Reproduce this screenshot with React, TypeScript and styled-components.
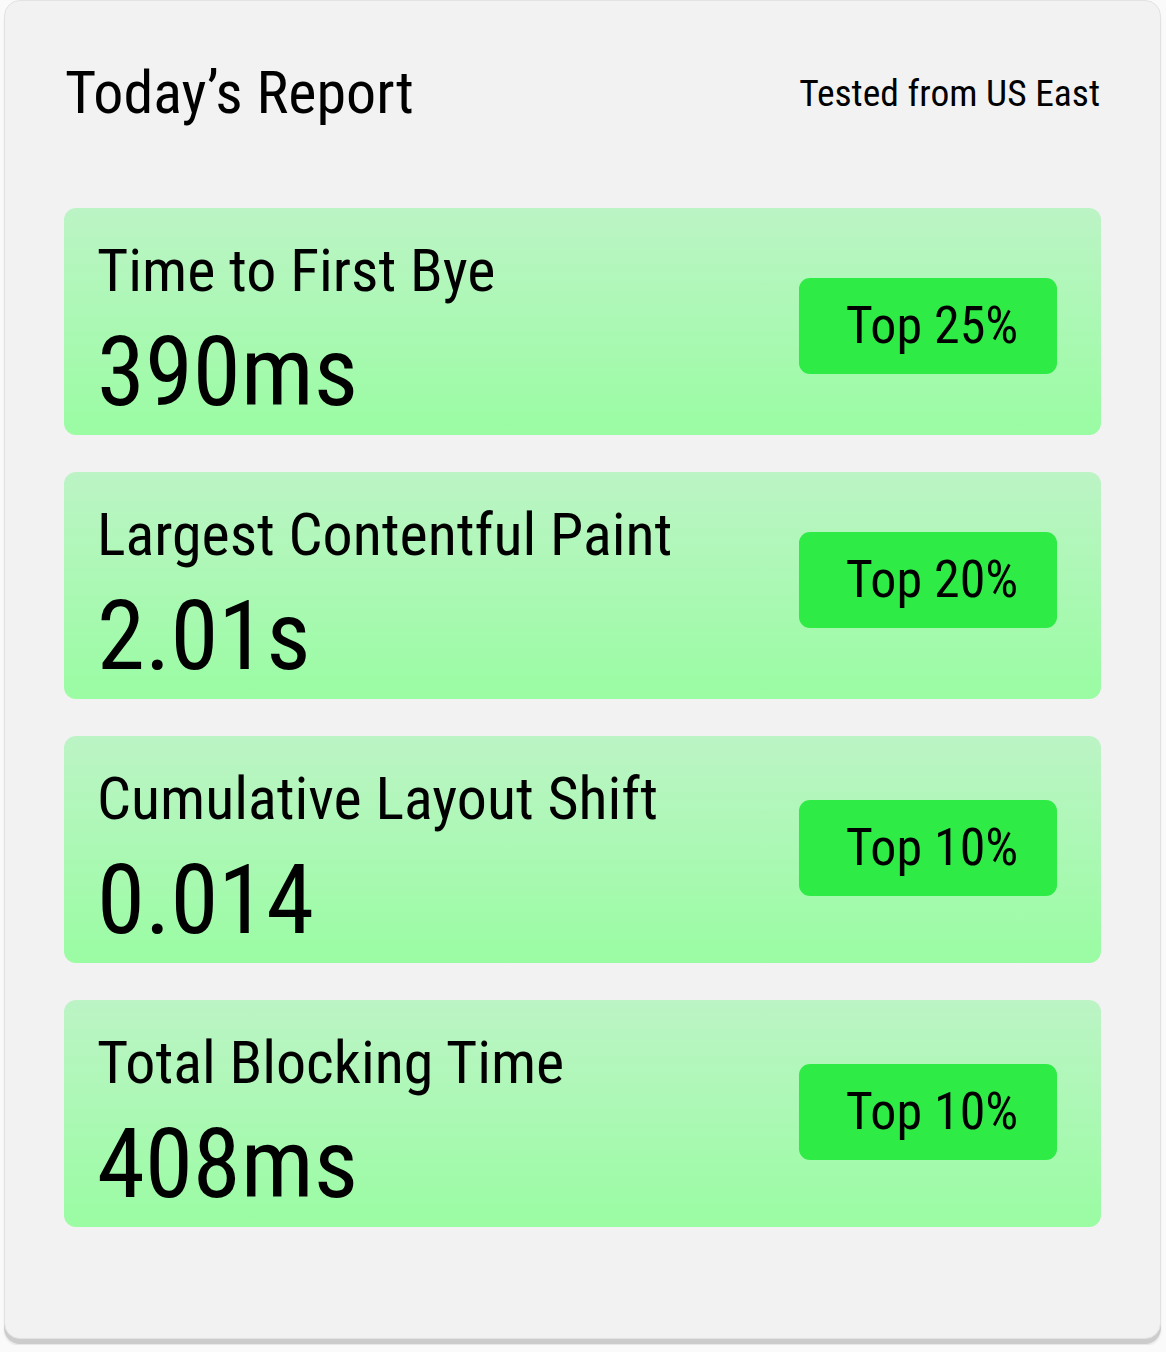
import * as React from 'react';
import styled, { createGlobalStyle } from 'styled-components';

type Metric = {
  label: string;
  value: string;
  rank: string;
  badgeTop: number;
};

const metrics: Metric[] = [
  { label: 'Time to First Bye', value: '390ms', rank: 'Top 25%', badgeTop: 70 },
  { label: 'Largest Contentful Paint', value: '2.01s', rank: 'Top 20%', badgeTop: 60 },
  { label: 'Cumulative Layout Shift', value: '0.014', rank: 'Top 10%', badgeTop: 64 },
  { label: 'Total Blocking Time', value: '408ms', rank: 'Top 10%', badgeTop: 64 },
];

const GlobalStyle = createGlobalStyle`
  body {
    margin: 0;
    background: #fafafa;
    font-family: "Roboto Condensed", "Liberation Sans Narrow", Roboto, sans-serif;
    font-stretch: condensed;
    color: #000;
  }
`;

const App: React.FC = () => {
  return (
    <>
      <GlobalStyle />
      <Styled.Page>
        <Styled.Report>
          <Styled.Header>
            <Styled.Title>Today’s Report</Styled.Title>
            <Styled.Origin>Tested from US East</Styled.Origin>
          </Styled.Header>
          <Styled.List>
            {metrics.map((m) => (
              <Styled.Card key={m.label}>
                <Styled.Info>
                  <Styled.Label>{m.label}</Styled.Label>
                  <Styled.Value>{m.value}</Styled.Value>
                </Styled.Info>
                <Styled.Badge $top={m.badgeTop}>{m.rank}</Styled.Badge>
              </Styled.Card>
            ))}
          </Styled.List>
        </Styled.Report>
      </Styled.Page>
    </>
  );
};

const Styled = {
  Page: styled.div`
    padding: 0 5px 6px 4px;
  `,
  Report: styled.section`
    box-sizing: border-box;
    width: 1157px;
    height: 1339px;
    padding: 62px 59px 0 59px;
    background: #f2f2f2;
    border: 1px solid #e2e2e2;
    border-radius: 16px;
    box-shadow: 0 5px 0 #cccccc, 0 7px 2px #e6e6e6;
  `,
  Header: styled.header`
    display: flex;
    justify-content: space-between;
    align-items: flex-start;
    padding: 0 1px 0 1px;
  `,
  Title: styled.h1`
    margin: 0;
    font-size: 60px;
    font-weight: 400;
    line-height: 1;
  `,
  Origin: styled.span`
    margin-top: 12px;
    font-size: 37.5px;
    line-height: 1;
  `,
  List: styled.div`
    display: flex;
    flex-direction: column;
    gap: 37px;
    margin-top: 85px;
  `,
  Card: styled.div`
    box-sizing: border-box;
    height: 227px;
    display: flex;
    align-items: flex-start;
    justify-content: space-between;
    padding: 33px 44px 0 33px;
    border-radius: 12px;
    background: linear-gradient(180deg, #bcf4c5 0%, #9afca3 100%);
  `,
  Info: styled.div`
    display: flex;
    flex-direction: column;
    gap: 23px;
  `,
  Label: styled.div`
    font-size: 60px;
    line-height: 1;
  `,
  Value: styled.div`
    font-size: 97px;
    line-height: 1;
  `,
  Badge: styled.div<{ $top: number }>`
    box-sizing: border-box;
    width: 258px;
    height: 96px;
    display: flex;
    align-items: center;
    justify-content: center;
    padding-left: 8px;
    margin-top: ${(p) => p.$top - 33}px;
    border-radius: 11px;
    background: #2eec45;
    font-size: 52px;
    line-height: 1;
  `,
};

export default App;
